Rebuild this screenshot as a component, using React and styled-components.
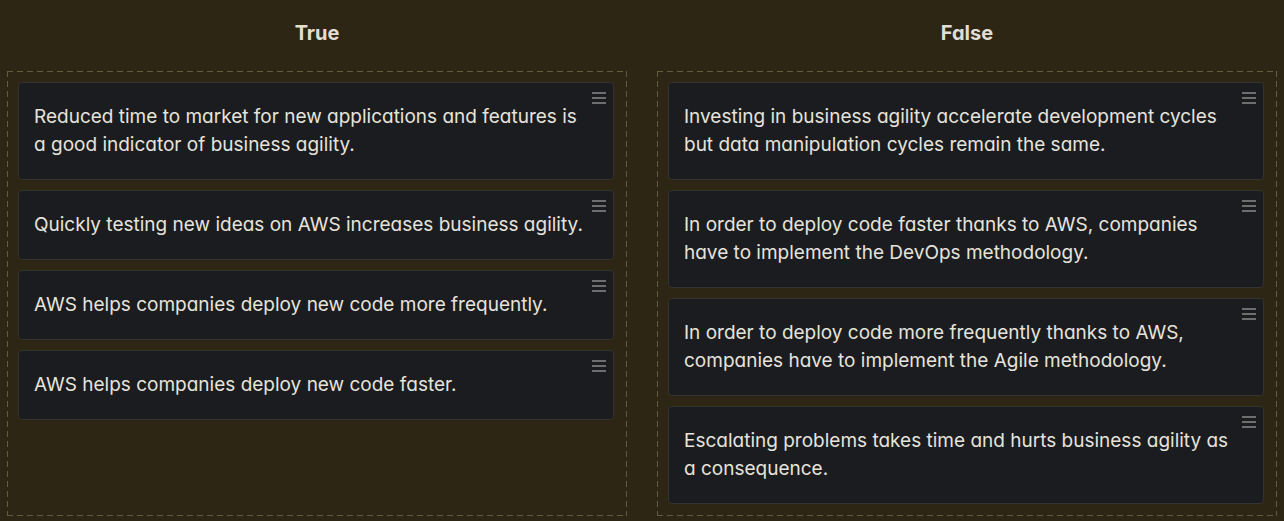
import React from 'react';
import styled, { createGlobalStyle } from 'styled-components';

const GlobalStyle = createGlobalStyle`
    html, body {
        margin: 0;
        padding: 0;
        background: #2e2614;
    }
    body {
        font-family: Inter, "Noto Sans", sans-serif;
        font-feature-settings: "cv11" 1;
        color: #e4e1da;
    }
`

const dash = '#645a3d'

const Board = styled.div`
    display: grid;
    grid-template-columns: 1fr 1fr;
    column-gap: 30px;
    padding: 0 7px 6px 7px;
`

const Column = styled.section`
    display: flex;
    flex-direction: column;
`

const Heading = styled.h2`
    margin: 0;
    padding-top: 21px;
    height: 71px;
    box-sizing: border-box;
    line-height: 24px;
    font-size: 20px;
    font-weight: 700;
    text-align: center;
    color: #e2ded6;
`

// dashed outline drawn with gradients so the dashes are longer than the browser's
const DropZone = styled.div`
    flex: 1;
    display: flex;
    flex-direction: column;
    gap: 10px;
    padding: 11px 13px 12px 11px;
    background:
        repeating-linear-gradient(90deg, ${dash} 0 6px, transparent 6px 10px) top left / 100% 1px no-repeat,
        repeating-linear-gradient(90deg, ${dash} 0 6px, transparent 6px 10px) bottom left / 100% 1px no-repeat,
        repeating-linear-gradient(180deg, ${dash} 0 6px, transparent 6px 10px) top left / 1px 100% no-repeat,
        repeating-linear-gradient(180deg, ${dash} 0 6px, transparent 6px 10px) top right / 1px 100% no-repeat;
`

const Card = styled.div`
    position: relative;
    padding: 20px 30px 20px 15px;
    background: #1b1c1f;
    border: 1px solid #34332f;
    border-radius: 4px;
    font-size: 19px;
    line-height: 28px;
    color: #e6e3dc;
`

const Handle = styled.svg`
    position: absolute;
    top: 8px;
    right: 7px;
    width: 14px;
    height: 13px;
`

const DragIcon = () => (
    <Handle viewBox="0 0 14 13">
        <rect x="0" y="1" width="14" height="2" fill="#6e6e6e" />
        <rect x="0" y="6" width="14" height="2" fill="#6e6e6e" />
        <rect x="0" y="11" width="14" height="2" fill="#6e6e6e" />
    </Handle>
)

const columns = [
    {
        title: 'True',
        items: [
            'Reduced time to market for new applications and features is a good indicator of business agility.',
            'Quickly testing new ideas on AWS increases business agility.',
            'AWS helps companies deploy new code more frequently.',
            'AWS helps companies deploy new code faster.',
        ],
    },
    {
        title: 'False',
        items: [
            'Investing in business agility accelerate development cycles but data manipulation cycles remain the same.',
            'In order to deploy code faster thanks to AWS, companies have to implement the DevOps methodology.',
            'In order to deploy code more frequently thanks to AWS, companies have to implement the Agile methodology.',
            'Escalating problems takes time and hurts business agility as a consequence.',
        ],
    },
]

const App = () => {
    return (
        <>
            <GlobalStyle />
            <Board>
                {columns.map((col) => (
                    <Column key={col.title}>
                        <Heading>{col.title}</Heading>
                        <DropZone>
                            {col.items.map((text) => (
                                <Card key={text}>
                                    {text}
                                    <DragIcon />
                                </Card>
                            ))}
                        </DropZone>
                    </Column>
                ))}
            </Board>
        </>
    );
};

export default App;
